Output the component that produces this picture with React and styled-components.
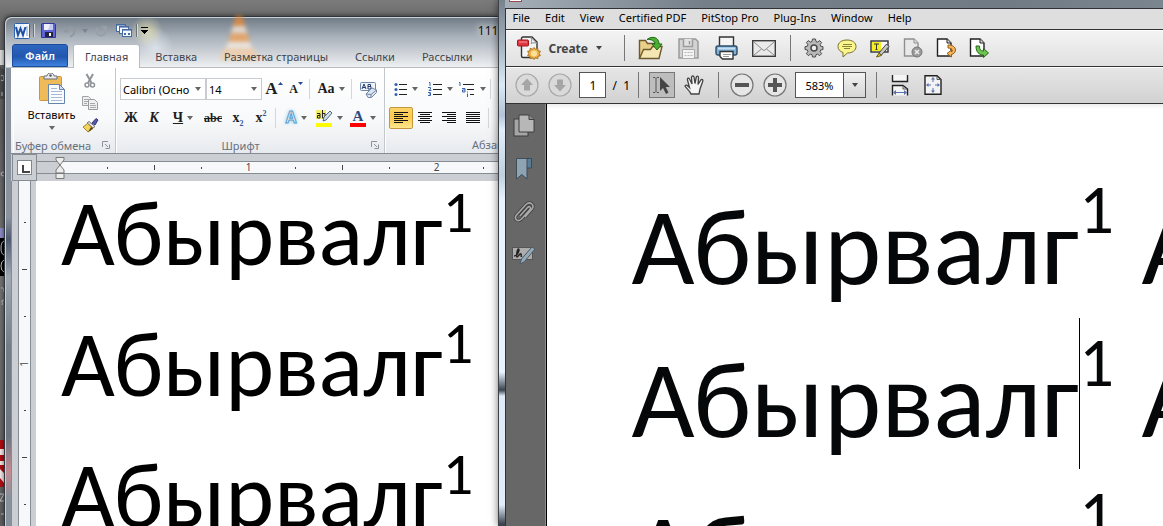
import React, { useState } from 'react';
import styled, { createGlobalStyle, css } from 'styled-components';

const GlobalStyle = createGlobalStyle`
  * {
    box-sizing: border-box;
  }

  body {
    margin: 0;
    overflow: hidden;
    font-family: 'Noto Sans', 'Open Sans', sans-serif;
    font-size: 11px;
  }

  button, input, select {
    font: inherit;
    color: inherit;
    margin: 0;
    padding: 0;
    border: 0;
    background: none;
  }
`;

const Arrow = ({ size = 5, color = '#666' }) => (
  <svg width={size + 1} height="4" viewBox="0 0 6 4" aria-hidden="true">
    <path d="M0 0h6L3 4z" fill={color} />
  </svg>
);

/* ---------- word icons ---------- */

const WordLogo = () => (
  <svg width="16" height="16" viewBox="0 0 16 16">
    <rect x="0.5" y="0.5" width="15" height="15" rx="1" fill="#e9f1fb" stroke="#2d62ae" />
    <rect x="10" y="1" width="5" height="14" fill="#fff" />
    <path d="M12 4h2M12 6h2M12 8h2M12 10h2M12 12h2" stroke="#6f9bd4" />
    <path d="M2 4l2 8 2.500-6.500L9 12l2.500-8" fill="none" stroke="#1f4fa0" strokeWidth="2" />
  </svg>
);

const SaveIcon = () => (
  <svg width="15" height="15" viewBox="0 0 15 15">
    <path d="M1 .5h12.500l1 1v13H.5V1z" fill="#5f62d4" stroke="#34369b" />
    <rect x="3" y="1" width="9" height="6" fill="#eef0fb" />
    <path d="M9 1h3v6H7z" fill="#c5cbee" />
    <rect x="4" y="9" width="8" height="5" fill="#22233f" />
    <rect x="8" y="10" width="2" height="3" fill="#fff" />
  </svg>
);

const UndoIcon = () => (
  <svg width="14" height="14" viewBox="0 0 14 14">
    <path d="M3 6c3-4 9-3 8.500 1.500C11.200 10 9 12 7 12.500" fill="none" stroke="#9299a1" strokeWidth="2.200" />
    <path d="M.5 2v6.500H7z" fill="#9299a1" />
  </svg>
);

const RedoIcon = () => (
  <svg width="14" height="14" viewBox="0 0 14 14">
    <path d="M3.500 4c-2.500 4 0 7.500 3.500 7.500s6-3.500 4-7" fill="none" stroke="#9aa0a8" strokeWidth="2.200" />
    <path d="M7 2h6v5.500z" fill="#9aa0a8" />
  </svg>
);

const WindowsIcon = () => (
  <svg width="17" height="14" viewBox="0 0 17 14">
    {[[0, 0], [3, 2], [6, 5]].map(([x, y]) => (
      <g key={x}>
        <rect x={x + 0.5} y={y + 0.5} width="9" height="7" fill="#f5f9ff" stroke="#48699c" />
        <path d={`M${x + 1} ${y + 1.5}h8`} stroke="#86a5d2" />
      </g>
    ))}
    <path d="M8 10h2M12 10h2" stroke="#3c6db5" strokeWidth="2" />
  </svg>
);

const QuickMore = () => (
  <svg width="8" height="8" viewBox="0 0 8 8" shapeRendering="crispEdges">
    <rect width="7" height="1" fill="#000" />
    <path d="M0 3h7L3.500 7z" fill="#000" />
  </svg>
);

const PasteIcon = () => (
  <svg width="26" height="31" viewBox="0 0 26 31">
    <rect x="0.5" y="3.5" width="22" height="24" rx="1" fill="#efbb59" stroke="#cf9440" />
    <path d="M5 6V3h3c0-4 7-4 7 0h3v3z" fill="#e8ebee" stroke="#6a6f76" />
    <circle cx="11.5" cy="2.500" r="1.200" fill="#555" />
    <path d="M9.500 11.500h11l5 5v14h-16z" fill="#fafcff" stroke="#6584ab" />
    <path d="M20.500 11.500v5h5z" fill="#d3e0f0" stroke="#6584ab" />
    <path d="M12 15.500h6M12 18.500h11M12 21.500h11M12 24.500h11M12 27.500h11" stroke="#a6b9d1" />
  </svg>
);

const CutIcon = () => (
  <svg width="12" height="16" viewBox="0 0 12 16">
    <path d="M2.500 1l5 9M9 1l-5 9" stroke="#8f9499" strokeWidth="2" />
    <circle cx="3" cy="12" r="2" fill="none" stroke="#8f9499" strokeWidth="1.500" />
    <circle cx="8.500" cy="12" r="2" fill="none" stroke="#8f9499" strokeWidth="1.500" />
  </svg>
);

const CopyIcon = () => (
  <svg width="16" height="14" viewBox="0 0 16 14">
    <path d="M.5.5h6l2 2v7h-8z" fill="#eee" stroke="#a1a4a7" />
    <path d="M2 3.500h4M2 5.500h4M2 7.500h3" stroke="#aaa" />
    <path d="M6.500 3.500h6l3 3v7h-9z" fill="#f0f0f0" stroke="#999c9f" />
    <path d="M8 7.500h5M8 9.500h6M8 11.500h6" stroke="#aaa" />
  </svg>
);

const BrushIcon = () => (
  <svg width="17" height="15" viewBox="0 0 17 15">
    <path d="M10 5l4-4.500L16 2l-3 5z" fill="#5656ad" stroke="#35357a" />
    <path d="M7 3.500l6 5-2 1.500-6-5z" fill="#dfe2e7" stroke="#6d6f74" />
    <path d="M5.500 5.500L1 9l5 5 5-3.500z" fill="#f2d45d" stroke="#a5862f" />
    <path d="M6 14l5-3.500-2-1.500z" fill="#4d4220" />
  </svg>
);

const GrowIcon = ({ down }) => (
  <GrowSvg width="5" height="3" viewBox="0 0 5 3">
    <path d={down ? 'M0 0h5L2.500 3z' : 'M0 3h5L2.500 0z'} fill="#2a4a94" />
  </GrowSvg>
);

const ClearIcon = () => (
  <svg width="17" height="17" viewBox="0 0 17 17">
    <rect x="0.500" y="1.500" width="15" height="8" rx="1" fill="#eff4fb" stroke="#6d86ad" />
    <path d="M2 8l2-5 2 5M3 6.500h2M8 3.500h2.500v2H8zM8 5.500h3V8H8z" fill="none" stroke="#263d6b" />
    <path d="M6 13l6-6 4.500 2v2.500l-5 5H8z" fill="#dde5f0" stroke="#7187a8" />
    <path d="M6 13l5 .5 5.500-4.500M11 13.500v3" fill="none" stroke="#7187a8" />
  </svg>
);

const HighlightIcon = () => (
  <svg width="17" height="17" viewBox="0 0 17 17">
    <rect x="0" y="0" width="10" height="9" fill="#f2ee63" />
    <path d="M1 3.500h3V8H1.500V5.500H4M6.500 0v8H9V3.500H6.500" fill="none" stroke="#222" />
    <path d="M7 11l1-4 6-6 2 2-6 7z" fill="#cfdded" stroke="#55697f" />
    <rect x="0" y="13" width="16" height="4" fill="#fdfb00" />
  </svg>
);

const BulletsIcon = () => (
  <svg width="14" height="14" viewBox="0 0 14 14">
    <g fill="#3a62ad">
      <circle cx="2" cy="2.500" r="1.600" />
      <circle cx="2" cy="7.500" r="1.600" />
      <circle cx="2" cy="12.500" r="1.500" />
    </g>
    <path d="M5 2.500h8M5 7.500h8M5 12.500h8" stroke="#222" />
  </svg>
);

const NumbersIcon = () => (
  <svg width="15" height="14" viewBox="0 0 15 14">
    <path d="M1 .5h1v3.500M0 5.500h2.500v1.500L1 8.500h2.500M0 10.500h2.500v3H0M1 12h2" fill="none" stroke="#3a62ad" />
    <path d="M5 2.500h9M5 7.500h9M5 12.500h9" stroke="#222" />
  </svg>
);

const LevelsIcon = () => (
  <svg width="18" height="15" viewBox="0 0 18 15">
    <path d="M1 .5h1V4M4 6.500h3V10H4.500V8H7M9.500 9.500v1M9.500 11.500V15" fill="none" stroke="#3a62ad" />
    <path d="M5 2.500h11M9 7.500h7M12 12.500h4" stroke="#222" />
  </svg>
);

const alignRows = {
  left: [[0, 14], [0, 9], [0, 14], [0, 9], [0, 14], [0, 9]],
  center: [[0, 14], [2, 10], [0, 14], [2, 10], [0, 14], [2, 10]],
  right: [[0, 14], [5, 9], [0, 14], [5, 9], [0, 14], [5, 9]],
  justify: [[0, 14], [0, 14], [0, 14], [0, 14], [0, 14], [0, 14]],
};

const AlignIcon = ({ kind }) => (
  <svg width="14" height="12" viewBox="0 0 14 12" shapeRendering="crispEdges">
    {alignRows[kind].map(([x, w], i) => (
      <rect key={i} x={x} y={i * 2} width={w} height="1" fill="#111" />
    ))}
  </svg>
);

const Launcher = () => (
  <svg width="8" height="8" viewBox="0 0 8 8">
    <path d="M.5 6V.5H6M3 3l3 3M7.500 3.500v4h-4" fill="none" stroke="#8c939c" />
  </svg>
);

const Cone = () => (
  <ConeSvg width="44" height="48" viewBox="0 0 44 48" aria-hidden="true">
    <path d="M19 2h6l4 12H15z" fill="#e78a35" />
    <path d="M16 12h12l2 7H14z" fill="#f0e6db" />
    <path d="M14 19h16l3 9H11z" fill="#eea25a" />
    <path d="M11 28h22l2 8H9z" fill="#f3efea" />
    <path d="M7 34h30l5 12H2z" fill="#f4cda8" />
  </ConeSvg>
);

/* ---------- word ---------- */

const tabs = ['Главная', 'Вставка', 'Разметка страницы', 'Ссылки', 'Рассылки'];
const rulerMarks = ['dot', 'tick', 'dot', '1', 'dot', 'tick', 'dot', '2', 'dot'];

const WordApp = () => {
  const [tab, setTab] = useState(tabs[0]);
  const [align, setAlign] = useState('left');

  return (
    <WordWindow>
      <Cone />
      <WordTitle>
        <QuickButton aria-label="Word" $w={22}><WordLogo /></QuickButton>
        <QuickSep />
        <QuickButton aria-label="Сохранить" $w={24}><SaveIcon /></QuickButton>
        <QuickButton aria-label="Отменить" $w={30}><UndoIcon /><Arrow color="#7d848c" /></QuickButton>
        <QuickButton aria-label="Повторить" $w={22}><RedoIcon /></QuickButton>
        <QuickButton aria-label="Окна" $w={24}><WindowsIcon /></QuickButton>
        <QuickSep />
        <QuickButton aria-label="Настройка панели" $w={12}><QuickMore /></QuickButton>
        <DocName>111</DocName>
      </WordTitle>
      <Tabs>
        <FileTab>Файл</FileTab>
        {tabs.map(name => (
          <Tab key={name} $active={name === tab} onClick={() => setTab(name)}>{name}</Tab>
        ))}
      </Tabs>
      <Ribbon>
        <Group>
          <GroupBody>
            <PasteButton>
              <PasteIcon />
              <span>Вставить</span>
              <Arrow />
            </PasteButton>
            <SmallColumn>
              <Tool aria-label="Вырезать" $w={24}><CutIcon /></Tool>
              <Tool aria-label="Копировать" $w={24}><CopyIcon /></Tool>
              <Tool aria-label="Формат по образцу" $w={24}><BrushIcon /></Tool>
            </SmallColumn>
          </GroupBody>
          <GroupLabel><span>Буфер обмена</span><Launcher /></GroupLabel>
        </Group>
        <Group>
          <GroupRows>
            <ToolRow>
              <Combo $w={86}>
                <select aria-label="Шрифт"><option>Calibri (Осно</option></select>
                <Arrow />
              </Combo>
              <Combo $w={56}>
                <select aria-label="Размер"><option>14</option></select>
                <Arrow />
              </Combo>
              <Tool aria-label="Увеличить" $w={24} $tight><Serif $size={17}>A</Serif><GrowIcon /></Tool>
              <Tool aria-label="Уменьшить" $w={20} $tight><Serif $size={12}>A</Serif><GrowIcon down /></Tool>
              <ToolSep />
              <Tool aria-label="Регистр" $w={34}><Serif $size={14}>Aa</Serif><Arrow /></Tool>
              <ToolSep />
              <Tool aria-label="Очистить формат" $w={24}><ClearIcon /></Tool>
            </ToolRow>
            <ToolRow>
              <Tool $w={22}><Serif $size={14}>Ж</Serif></Tool>
              <Tool $w={24}><Serif $size={14} $italic>К</Serif></Tool>
              <Tool $w={34}><Serif $size={14} $line="underline">Ч</Serif><Arrow /></Tool>
              <Tool $w={26}><Serif $size={12} $line="line-through">abc</Serif></Tool>
              <Tool $w={24}><Serif $size={14}>x<sub>2</sub></Serif></Tool>
              <Tool $w={22}><Serif $size={14}>x<sup>2</sup></Serif></Tool>
              <ToolSep />
              <Tool $w={32}><Glow>A</Glow><Arrow /></Tool>
              <Tool aria-label="Выделение" $w={34}><HighlightIcon /><Arrow /></Tool>
              <Tool $w={34}><RedBar>A</RedBar><Arrow /></Tool>
            </ToolRow>
          </GroupRows>
          <GroupLabel $center><span>Шрифт</span><Launcher /></GroupLabel>
        </Group>
        <Group $last>
          <GroupRows>
            <ToolRow>
              <Tool aria-label="Маркеры" $w={34}><BulletsIcon /><Arrow /></Tool>
              <Tool aria-label="Нумерация" $w={34}><NumbersIcon /><Arrow /></Tool>
              <Tool aria-label="Многоуровневый список" $w={30}><LevelsIcon /><Arrow /></Tool>
              <ToolSep />
            </ToolRow>
            <ToolRow>
              {Object.keys(alignRows).map(kind => (
                <Tool
                  key={kind}
                  aria-label={kind}
                  $w={24}
                  $on={kind === align}
                  onClick={() => setAlign(kind)}
                >
                  <AlignIcon kind={kind} />
                </Tool>
              ))}
              <ToolSep />
            </ToolRow>
          </GroupRows>
          <ParagraphLabel>Абзац</ParagraphLabel>
        </Group>
      </Ribbon>
      <RulerBar>
        <Corner><CornerBox /></Corner>
        <RulerMargin />
        <Ruler>
          <Indent width="10" height="22" viewBox="0 0 10 22" aria-hidden="true">
            <path d="M1 .5h8V3L5 8 1 3zM5 8l4 5v3H1v-3zM1 16.500h8v5H1z" fill="#ececec" stroke="#777" />
          </Indent>
          {rulerMarks.map((mark, i) => <Mark key={i} kind={mark} />)}
        </Ruler>
      </RulerBar>
      <WordBody>
        <SideRuler>
          <SideStrip>
            {rulerMarks.slice(0, 7).map((mark, i) => <Mark key={i} kind={mark} side />)}
          </SideStrip>
        </SideRuler>
        <WordPage>
          {[0, 1, 2].map(n => (
            <WordLine key={n}>Абырвалг<sup>1</sup></WordLine>
          ))}
        </WordPage>
      </WordBody>
    </WordWindow>
  );
};

const Mark = ({ kind, side }) => (
  <MarkCell $side={side}>
    {kind === 'dot' || kind === 'tick'
      ? <MarkLine $long={kind === 'tick'} $side={side} />
      : <MarkNumber $side={side}>{kind}</MarkNumber>}
  </MarkCell>
);

/* ---------- acrobat icons ---------- */

const PageShape = ({ stroke = '#333', fill = '#fff' }) => (
  <>
    <path d="M.5 1h9.500l4 4v13H.5z" fill={fill} stroke={stroke} strokeWidth="1.400" />
    <path d="M10 1v4h4" fill="#ddd" stroke={stroke} />
  </>
);

const CreateIcon = () => (
  <svg width="24" height="24" viewBox="0 0 24 24">
    <path d="M4.500 2.500Q4.500 1 6 1h9l5 5v14q0 1.500-1.500 1.500H6q-1.500 0-1.500-1.500z" fill="#f4f4f4" stroke="#333" strokeWidth="1.400" />
    <path d="M14 1.500c1 3 1 5 0 6 2-1 4-1 6 0z" fill="#fff" stroke="#888" />
    <rect x="0.500" y="4" width="11" height="6" rx="1" fill="#e2363f" stroke="#a5141d" />
    <path d="M2 6h8" stroke="#f39a9d" />
    <path d="M17 11.500l1.500 1.800 2.300-1 .2 2.500 2.400.5-1.200 2.200 1.200 2.200-2.400.5-.2 2.500-2.300-1L17 23.500l-1.500-1.800-2.300 1-.2-2.500-2.400-.5 1.200-2.200-1.200-2.200 2.400-.5.2-2.500 2.300 1z" fill="#f0b54a" stroke="#a9711c" />
    <circle cx="17" cy="17.500" r="3" fill="#fbe09a" />
  </svg>
);

const FolderIcon = () => (
  <svg width="25" height="24" viewBox="0 0 25 24">
    <path d="M1.500 22.500v-18h6l2 3h11v5" fill="#e8cf8a" stroke="#6e592d" strokeWidth="1.400" />
    <path d="M1.500 22.500l4-9h7l2-3h9.500l-3 12z" fill="#f6e6b4" stroke="#6e592d" strokeWidth="1.400" />
    <path d="M9 3.500C14-.5 21 1 21 8h3l-5 6-5-6h3c0-3-4-5-8-4.500z" fill="#4cae32" stroke="#226c16" />
  </svg>
);

const DiskIcon = () => (
  <svg width="21" height="21" viewBox="0 0 21 21">
    <path d="M1 1h16.500L20 3.500V20H1z" fill="#d3d3d3" stroke="#9b9b9b" strokeWidth="1.500" />
    <path d="M5.500 1v7.500h9V1M11.500 3v3.500" fill="#e2e2e2" stroke="#9b9b9b" strokeWidth="1.500" />
    <path d="M4.500 20v-8.500h12V20" fill="#f3f3f3" stroke="#aaa" />
    <path d="M6.500 14.500h8M6.500 17.500h8" stroke="#b9b9b9" strokeDasharray="2 1" />
  </svg>
);

const PrintIcon = () => (
  <svg width="23" height="24" viewBox="0 0 23 24">
    <path d="M4.500 10V1h14v9" fill="#f5f5f5" stroke="#333" strokeWidth="1.400" />
    <rect x="1" y="10" width="21" height="9" rx="2" fill="#7fb0d8" stroke="#2e4c68" strokeWidth="1.400" />
    <path d="M3 12.500h17" stroke="#c6e0f3" strokeWidth="2" />
    <path d="M5 15.500h13v7.500H7.500L5 20.500z" fill="#fff" stroke="#333" strokeWidth="1.400" />
    <path d="M8 18.500h8M8 20.500h6" stroke="#999" />
  </svg>
);

const MailIcon = () => (
  <svg width="24" height="17" viewBox="0 0 24 17">
    <rect x="0.700" y="0.700" width="22.600" height="15.600" fill="#e9e9e9" stroke="#3b3b3b" strokeWidth="1.400" />
    <path d="M2 2l9 8q1 .8 2 0l9-8M2 15l7.500-6M22 15l-7.500-6" fill="none" stroke="#8b8b8b" />
  </svg>
);

const GearIcon = () => (
  <svg width="20" height="20" viewBox="0 0 20 20">
    <path d="M8.500 1h3l.5 2.500 1.500.6 2.200-1.500 1.900 1.900-1.500 2.200.6 1.500 2.300.5v2.800l-2.300.5-.6 1.500 1.500 2.200-1.900 1.900-2.200-1.500-1.500.6-.5 2.300h-3L8 16.700l-1.500-.6-2.200 1.500-1.900-1.900 1.500-2.200-.6-1.500L1 11.500V8.700l2.300-.5.6-1.500-1.500-2.200 1.900-1.900 2.200 1.500L8 3.500z" fill="#b9b9b9" stroke="#4a4a4a" />
    <circle cx="10" cy="10" r="3" fill="#eee" stroke="#4a4a4a" strokeWidth="1.500" />
  </svg>
);

const BubbleIcon = () => (
  <svg width="20" height="19" viewBox="0 0 20 19">
    <path d="M10 1c5.500 0 9 2.700 9 6.500S15.500 14 10.500 14L6 18v-4.500C3 12.500 1 10.500 1 7.500 1 3.700 4.500 1 10 1z" fill="#fbf58d" stroke="#77712e" />
    <path d="M6 5.500h9M5 7.500h10M7 9.500h6" stroke="#8a8436" />
  </svg>
);

const TextMarkIcon = () => (
  <svg width="20" height="19" viewBox="0 0 20 19">
    <rect x="1" y="2" width="17" height="11" fill="#f7f7f7" stroke="#333" strokeWidth="1.400" />
    <rect x="2" y="3" width="9" height="9" fill="#f5ee22" />
    <path d="M4 5h5M6.500 5v5.500M5.500 10.500h2" stroke="#333" strokeWidth="1" fill="none" />
    <path d="M9 14l7.500-9L19 7.500 11.500 16z" fill="#c6c6c6" stroke="#444" />
    <path d="M9 14l2.500 2.500-5 1.500z" fill="#d8c22a" stroke="#6b5f12" />
  </svg>
);

const PageActionIcon = ({ kind }) => (
  <svg width="20" height="20" viewBox="-1 0 20 20">
    <PageShape stroke={kind === 'stop' ? '#8f8f8f' : '#222'} fill={kind === 'stop' ? '#e9e9e9' : '#fff'} />
    {kind === 'stop' && (
      <>
        <circle cx="13" cy="14" r="5" fill="#9b9b9b" stroke="#777" />
        <path d="M11 12l4 4M15 12l-4 4" stroke="#eee" strokeWidth="1.400" />
      </>
    )}
    {kind === 'turn' && (
      <path d="M11 7c4-.5 7.500 2 7.500 5 0 2.500-2 4-4 4.500V19L10 15.500l4.500-3.500v2c2-1.500.5-4-3.500-4z" fill="#f5b45b" stroke="#9a5c12" />
    )}
    {kind === 'export' && (
      <path d="M6 8h3.500c0 3.500 1 5 4 5v-2.500l5 4.500-5 4.500V17C9 17 6 14 6 8z" fill="#6cc44d" stroke="#22661a" />
    )}
  </svg>
);

const RoundIcon = ({ kind, muted }) => (
  <svg width="24" height="24" viewBox="0 0 24 24">
    <circle cx="12" cy="12" r="11" fill={muted ? '#dadada' : '#e6e6e6'} stroke={muted ? '#a9a9a9' : '#757575'} strokeWidth="1.200" />
    {kind === 'up' && <path d="M12 5.500l6 6.500h-3v5.500H9V12H6z" fill="#a6a6a6" />}
    {kind === 'down' && <path d="M12 18.500L6 12h3V6.500h6V12h3z" fill="#a6a6a6" />}
    {kind === 'minus' && <path d="M5 10h14v4H5z" fill="#555" />}
    {kind === 'plus' && <path d="M5 10h5V5h4v5h5v4h-5v5h-4v-5H5z" fill="#555" />}
  </svg>
);

const SelectIcon = () => (
  <svg width="20" height="20" viewBox="0 0 20 20">
    <path d="M1 2.500h2L4 3.500l1-1h2M4 3.500v13M1 17.500h2l1-1 1 1h2" fill="none" stroke="#555" />
    <path d="M8 2v14l3-3 3 6 2.500-1.500-2.800-5.500H18z" fill="#444" />
  </svg>
);

const HandIcon = () => (
  <svg width="21" height="20" viewBox="0 0 21 20">
    <path d="M7 19c-1-3-5-6-6-8 1-2 3 0 4.500 1.500L3.500 5C3 3 5 2.500 5.800 4.500L8 9 7.500 2.500c0-2 2.300-2 2.600 0L11 8.500l1.200-6c.4-2 2.500-1.500 2.300.4L14 9.500l2.700-4.300c1-1.500 2.800-.5 2 1.300L16 14l-1 5z" fill="#f5f5f5" stroke="#444" strokeWidth="1.300" />
  </svg>
);

const FitWidthIcon = () => (
  <svg width="18" height="21" viewBox="0 0 18 21">
    <path d="M1.500 0v6.500h15V0" fill="#f5f5f5" stroke="#222" strokeWidth="1.400" />
    <path d="M1.500 20.500v-10h10.500l4.500 3.500v6.500" fill="#f5f5f5" stroke="#222" strokeWidth="1.400" />
    <path d="M12 10.500V14h4" fill="none" stroke="#555" />
    <path d="M3 17.500h12" stroke="#5b72ae" />
    <path d="M2 17.500l3-2.500v5zM16 17.500L13 15v5z" fill="#5b72ae" />
  </svg>
);

const FitPageIcon = () => (
  <svg width="18" height="20" viewBox="0 0 18 20">
    <path d="M1 .700h12L17 4.500v14.800H1z" fill="#f3f3f3" stroke="#222" strokeWidth="1.400" />
    <path d="M13 1v3.500h4" fill="none" stroke="#555" />
    <path d="M9 4v3M9 13v3M4 10h3M11 10h3" stroke="#5b72ae" />
    <path d="M9 2l2 2.500H7zM9 18l2-2.500H7zM2 10l2.500-2v4zM16 10l-2.500-2v4z" fill="#5b72ae" />
  </svg>
);

const PagesIcon = () => (
  <svg width="22" height="24" viewBox="0 0 22 24">
    <rect x="1" y="5" width="14" height="17" fill="#a5a5a5" stroke="#3f3f3f" />
    <path d="M6 1h10l5 4.500V18H6z" fill="#b7b7b7" stroke="#3f3f3f" />
    <path d="M16 1v4.500h5" fill="#8b8b8b" stroke="#3f3f3f" />
  </svg>
);

const BookmarkIcon = () => (
  <svg width="18" height="24" viewBox="0 0 18 24">
    <path d="M10 1.500h6.500V11H10z" fill="#597c97" stroke="#3a4b58" />
    <path d="M1.500 1.500H12V22l-5.200-4.500L1.500 22z" fill="#8ea4b3" stroke="#3f4d57" />
  </svg>
);

const ClipIcon = () => (
  <svg width="24" height="24" viewBox="0 0 24 24">
    <path d="M8 16l7.500-8.500c2-2 4 0 2.500 2L9.500 19c-3.500 3.500-8 0-5-4L14 4.500c4-4 9 .5 6 4.500L13 17" fill="none" stroke="#404040" strokeWidth="3.200" />
    <path d="M8 16l7.500-8.500c2-2 4 0 2.500 2L9.500 19c-3.500 3.500-8 0-5-4L14 4.500c4-4 9 .5 6 4.500L13 17" fill="none" stroke="#a9a9a9" strokeWidth="1.600" />
  </svg>
);

const SignIcon = () => (
  <svg width="24" height="20" viewBox="0 0 24 20">
    <rect x="0.500" y="2.500" width="20" height="12" fill="#adadad" stroke="#555" />
    <path d="M2 11c4 0 6-7 4.500-7S4 12 5 12s3-4 4-3-1 3 1 2" fill="none" stroke="#222" strokeWidth="1.400" />
    <path d="M8 19l1.500-5L20 2l3 2-10.500 12.500z" fill="#93aabb" stroke="#4d5a64" />
  </svg>
);

/* ---------- acrobat ---------- */

const menus = ['File', 'Edit', 'View', 'Certified PDF', 'PitStop Pro', 'Plug-Ins', 'Window', 'Help'];

const AcrobatApp = () => {
  const [page, setPage] = useState('1');

  return (
    <AcrobatWindow>
      <AcrobatTitle><TitleIcon /></AcrobatTitle>
      <AcrobatInner>
        <MenuBar>
          {menus.map(name => <MenuItem key={name}>{name}</MenuItem>)}
        </MenuBar>
        <Toolbar>
          <CreateButton><CreateIcon /><span>Create</span><Arrow size={7} color="#444" /></CreateButton>
          <BarSep />
          <BarButton aria-label="Open" $wide><FolderIcon /></BarButton>
          <BarButton aria-label="Save" $wide><DiskIcon /></BarButton>
          <BarButton aria-label="Print" $wide><PrintIcon /></BarButton>
          <BarButton aria-label="Email" $wide><MailIcon /></BarButton>
          <BarSep />
          <BarButton aria-label="Settings"><GearIcon /></BarButton>
          <BarButton aria-label="Comment"><BubbleIcon /></BarButton>
          <BarButton aria-label="Highlight text"><TextMarkIcon /></BarButton>
          <BarButton aria-label="Remove"><PageActionIcon kind="stop" /></BarButton>
          <BarButton aria-label="Rotate"><PageActionIcon kind="turn" /></BarButton>
          <BarButton aria-label="Export"><PageActionIcon kind="export" /></BarButton>
        </Toolbar>
        <Toolbar $second>
          <BarButton aria-label="Previous page"><RoundIcon kind="up" muted /></BarButton>
          <BarButton aria-label="Next page"><RoundIcon kind="down" muted /></BarButton>
          <PageInput aria-label="Page" value={page} onChange={e => setPage(e.target.value)} />
          <PageTotal>/&nbsp; 1</PageTotal>
          <BarSep />
          <BarButton aria-label="Select"><Pressed><SelectIcon /></Pressed></BarButton>
          <BarButton aria-label="Hand"><HandIcon /></BarButton>
          <BarSep />
          <BarButton aria-label="Zoom out"><RoundIcon kind="minus" /></BarButton>
          <BarButton aria-label="Zoom in"><RoundIcon kind="plus" /></BarButton>
          <ZoomBox>
            <select aria-label="Zoom"><option>583%</option></select>
            <ZoomArrow><Arrow size={7} color="#444" /></ZoomArrow>
          </ZoomBox>
          <BarSep $wide />
          <BarButton aria-label="Fit width"><FitWidthIcon /></BarButton>
          <BarButton aria-label="Fit page"><FitPageIcon /></BarButton>
        </Toolbar>
        <AcrobatBody>
          <NavPane>
            <NavButton aria-label="Pages"><PagesIcon /></NavButton>
            <NavButton aria-label="Bookmarks"><BookmarkIcon /></NavButton>
            <NavButton aria-label="Attachments"><ClipIcon /></NavButton>
            <NavButton aria-label="Signatures"><SignIcon /></NavButton>
          </NavPane>
          <PdfPage>
            {[0, 1, 2].map(n => (
              <PdfLine key={n}>
                <PdfWord>Абырвалг{n === 1 && <Caret />}<sup>1</sup></PdfWord>
                <PdfWord>Абырвалг<sup>1</sup></PdfWord>
              </PdfLine>
            ))}
          </PdfPage>
        </AcrobatBody>
      </AcrobatInner>
    </AcrobatWindow>
  );
};

const App = () => (
  <Desktop>
    <GlobalStyle />
    <Backdrop width="16" height="526" viewBox="0 0 16 526" aria-hidden="true">
      <path d="M0 50h5v15H0z" fill="#ddd" />
      <path d="M0 66q3 5 5 3v30H0z" fill="#4b4b4b" />
      <path d="M0 228h5v10H0z" fill="#8d8cc8" />
      <path d="M0 238h5v38H0z" fill="#000" />
      <path d="M4 241q-3 1-3 7t3 7M4 260q-3 1-3 6t3 6" fill="none" stroke="#c8c8d8" />
      <path d="M0 440h5v47H0z" fill="#b40d12" />
      <path d="M0 449h4v6H0zM0 461h5v4H0zM0 469l5 5v10l-5-6z" fill="#f6e9e9" />
      <path d="M1 76q3-2 3 2t-3 2M2 92v4M4 172q-3 0-3 2t3 2M1 288q3-1 3 4M4 300q-3 0-2 2t0 3M0 494h4l-4 7h4M1 514h3" fill="none" stroke="#c5c5c5" />
    </Backdrop>
    <WordApp />
    <AcrobatApp />
  </Desktop>
);

/* ---------- desktop ---------- */

const Desktop = styled.main`
  position: relative;
  display: grid;
  grid-template-columns: minmax(0, 3fr) minmax(0, 4fr);
  height: 100vh;
  overflow: hidden;
  background: linear-gradient(#7b7b7b, #6c6c6c 16px, #5f5f5f 120px, #757575 50%, #606060);
`;

const Backdrop = styled.svg`
  position: absolute;
  left: 0;
  top: 0;
`;

/* ---------- word styles ---------- */

const WordWindow = styled.section`
  position: relative;
  display: flex;
  flex-direction: column;
  min-height: 0;
  margin: 16px 0 0 4px;
  padding-left: 6px;
  border: 1px solid #30353b;
  border-width: 1px 0 0 1px;
  border-radius: 7px 0 0 0;
  box-shadow: inset 1px 1px 0 #c9d0d8, 0 0 5px rgba(0, 0, 0, 0.6);
  background:
    radial-gradient(ellipse 16px 16px at 142px 14px, rgba(250, 244, 180, 0.6), transparent),
    radial-gradient(ellipse 18px 20px at 150px 30px, rgba(235, 240, 250, 0.6), transparent),
    linear-gradient(90deg, transparent 6px, #f4f6f8 6px) 0 51px no-repeat,
    linear-gradient(#6f7a85, #a9b1ba 20px, #eef0f2 50px, #8b949e 51px, #8a939e 200px, #4e5a70 222px, #9fa8b2 260px, #737d88 330px, #6d7680 420px, #c38d95 455px, #87919b 480px);
`;

const ConeSvg = styled.svg`
  position: absolute;
  left: 212px;
  top: -3px;
  filter: blur(2px);
  opacity: 0.8;
`;

const WordTitle = styled.header`
  position: relative;
  display: flex;
  align-items: center;
  height: 27px;
`;

const QuickButton = styled.button`
  display: flex;
  align-items: center;
  justify-content: center;
  gap: 5px;
  flex: none;
  width: ${props => props.$w}px;
  height: 22px;

  svg {
    flex: none;
  }
`;

const QuickSep = styled.span`
  width: 1px;
  height: 13px;
  margin-right: 2px;
  background: #6b7179;
  box-shadow: 1px 0 0 #d5d9dd;
`;

const DocName = styled.span`
  margin-left: auto;
  font-size: 12px;
  text-shadow: 0 0 6px #fff, 0 0 8px #fff;
  color: #111;
`;

const Tabs = styled.nav`
  position: relative;
  display: flex;
  height: 24px;
  padding-left: 1px;
  border-bottom: 1px solid #b7bcc3;
`;

const Tab = styled.button`
  height: 24px;
  padding: 0 13px 0 14px;
  white-space: nowrap;
  color: #3f444a;

  ${props => props.$active && css`
    margin: 0 1px 0 2px;
    padding: 0 11px;
    border: 1px solid #b7bcc3;
    border-bottom: 0;
    border-radius: 3px 3px 0 0;
    background: #fff;
  `}
`;

const FileTab = styled.button`
  width: 56px;
  height: 23px;
  margin-right: 3px;
  border: 1px solid #1c4a9c;
  border-radius: 3px 3px 0 0;
  color: #fff;
  font-weight: 600;
  background: linear-gradient(#2f66c0, #2257b0 55%, #3f82dd);
`;

const Ribbon = styled.div`
  display: flex;
  height: 86px;
  padding-left: 2px;
  overflow: hidden;
  border-bottom: 1px solid #868c94;
  background: linear-gradient(#fff, #f8f9fa 60%, #e7eaee);
`;

const Group = styled.section`
  display: flex;
  flex-direction: column;
  flex: none;
  border-right: ${props => (props.$last ? 0 : 1)}px solid #c2c7cd;
  box-shadow: inset 1px 0 0 #fff;
`;

const GroupBody = styled.div`
  display: flex;
  flex: 1;
  width: 102px;
`;

const GroupRows = styled.div`
  display: flex;
  flex-direction: column;
  flex: 1;
  gap: 5px;
  padding: 9px 4px 0;
`;

const GroupLabel = styled.div`
  display: flex;
  align-items: center;
  justify-content: space-between;
  height: 16px;
  padding: 0 5px 0 2px;
  color: #67707d;

  span {
    flex: ${props => (props.$center ? 1 : 'none')};
    padding-right: ${props => (props.$center ? 8 : 0)}px;
    text-align: center;
  }
`;

const ParagraphLabel = styled.div`
  height: 16px;
  padding-left: 87px;
  line-height: 16px;
  color: #67707d;
`;

const PasteButton = styled.button`
  display: flex;
  flex-direction: column;
  align-items: center;
  width: 65px;
  padding: 5px 0 0 12px;
  line-height: 22px;
`;

const SmallColumn = styled.div`
  display: flex;
  flex-direction: column;
  padding: 2px 0 0;
`;

const ToolRow = styled.div`
  display: flex;
  align-items: center;
  height: 24px;
`;

const Tool = styled.button`
  display: flex;
  align-items: center;
  justify-content: center;
  gap: ${props => (props.$tight ? 0 : 4)}px;
  flex: none;
  width: ${props => props.$w}px;
  height: 22px;
  color: #1d1d1d;

  svg {
    flex: none;
  }

  ${props => props.$on && css`
    border: 1px solid #c2973e;
    border-radius: 2px;
    background: linear-gradient(#fbd46a, #fcc94d 45%, #fee78c);
  `}
`;

const GrowSvg = styled.svg`
  align-self: flex-start;
  margin-top: 4px;
`;

const ToolSep = styled.span`
  flex: none;
  width: 1px;
  height: 20px;
  margin: 0 4px 0 3px;
  background: #d3d6da;
`;

const Combo = styled.label`
  display: flex;
  align-items: center;
  width: ${props => props.$w}px;
  height: 22px;
  padding: 0 4px 0 2px;
  border: 1px solid #c8ccd1;
  background: #fff;

  select {
    flex: 1;
    min-width: 0;
    appearance: none;
    outline: 0;
  }
`;

const Serif = styled.span`
  font-family: 'Liberation Serif', serif;
  font-size: ${props => props.$size}px;
  font-weight: 700;
  font-style: ${props => (props.$italic ? 'italic' : 'normal')};
  text-decoration: ${props => props.$line || 'none'};
  line-height: 20px;

  sub, sup {
    font-size: 8px;
    line-height: 0;
    color: #2f5aa8;
  }
`;

const Glow = styled.span`
  font-family: 'Liberation Sans', sans-serif;
  font-size: 16px;
  font-weight: 700;
  color: #eaf5fd;
  -webkit-text-stroke: 1px #5b9bc8;
  text-shadow: 0 0 4px #6bc1f2;
`;

const RedBar = styled.span`
  width: 16px;
  height: 17px;
  border-bottom: 4px solid #f00;
  font-family: 'Liberation Serif', serif;
  font-size: 15px;
  font-weight: 700;
  line-height: 13px;
  color: #2c4a80;
`;

const RulerBar = styled.div`
  display: flex;
  align-items: center;
  flex: none;
  height: 27px;
  padding-left: 1px;
  background: #cbcfd4;
`;

const Corner = styled.div`
  display: flex;
  align-items: center;
  justify-content: center;
  width: 25px;
  height: 27px;
  border: 1px solid #858c94;
`;

const CornerBox = styled.span`
  width: 15px;
  height: 15px;
  border: 1px solid #80868e;
  background: #fff;

  &::after {
    content: '';
    display: block;
    width: 6px;
    height: 6px;
    margin: 4px 0 0 4px;
    border: solid #444;
    border-width: 0 0 2px 2px;
  }
`;

const RulerMargin = styled.span`
  width: 23px;
  height: 13px;
  border: 1px solid #858c94;
  border-width: 1px 0;
`;

const Ruler = styled.div`
  position: relative;
  display: flex;
  flex: 1;
  min-width: 0;
  height: 13px;
  padding-left: 24px;
  border: 1px solid #858c94;
  border-width: 1px 0;
  background: #f7f8f9;
`;

const Indent = styled.svg`
  position: absolute;
  left: -5px;
  top: -5px;
`;

const MarkCell = styled.span`
  display: flex;
  flex: none;
  align-items: center;
  justify-content: center;
  width: ${props => (props.$side ? 'auto' : '47px')};
  height: ${props => (props.$side ? '47px' : 'auto')};
`;

const MarkLine = styled.span`
  width: ${props => (props.$side ? (props.$long ? 5 : 2) : 1)}px;
  height: ${props => (props.$side ? 1 : props.$long ? 5 : 2)}px;
  background: #444;
`;

const MarkNumber = styled.span`
  font-size: 10px;
  line-height: 11px;
  color: #444;
  writing-mode: ${props => (props.$side ? 'sideways-lr' : 'horizontal-tb')};
`;

const WordBody = styled.div`
  display: flex;
  flex: 1;
  min-height: 0;
`;

const SideRuler = styled.div`
  width: 25px;
  padding: 0 6px;
  background: #cbcfd4;
  border-left: 1px solid #858c94;
`;

const SideStrip = styled.div`
  display: flex;
  flex-direction: column;
  width: 13px;
  height: 100%;
  padding-top: 18px;
  border: 1px solid #858c94;
  border-width: 0 1px;
  background: #f7f8f9;
`;

const WordPage = styled.article`
  flex: 1;
  min-width: 0;
  padding-left: 25px;
  overflow: hidden;
  background: #fff;
`;

const WordLine = styled.p`
  margin: 0;
  height: 131px;
  line-height: 104px;
  white-space: nowrap;
  font-family: Calibri, Carlito, Lato, 'Open Sans', sans-serif;
  font-size: 93px;
  color: #000;

  sup {
    font-size: 60px;
    line-height: 0;
    vertical-align: 33px;
  }
`;

/* ---------- acrobat styles ---------- */

const AcrobatWindow = styled.section`
  position: relative;
  display: flex;
  flex-direction: column;
  min-width: 0;
  min-height: 0;
  padding-left: 6px;
  border-left: 1px solid #3d4249;
  box-shadow: 0 0 8px rgba(0, 0, 0, 0.55);
  background: linear-gradient(#77828d, #9eabb8 40px, #dce9f6 85px, #b4c3d8 115px, #e3effb 130px, #c1cfdf 175px, #e9f4ff 200px, #e9f4ff 372px, #3b434d 390px, #dfeaf6 396px, #e2edf8 505px, #3b434d 524px);
`;

const AcrobatTitle = styled.header`
  height: 8px;
  padding-left: 4px;
  background: linear-gradient(90deg, #a6afb8, #747f8a 200px, #707b86 500px, #7a858f);
`;

const TitleIcon = styled.span`
  display: block;
  width: 13px;
  height: 2px;
  border: 1px solid #9c4850;
  border-top: 0;
  background: #fff;
`;

const AcrobatInner = styled.div`
  display: flex;
  flex-direction: column;
  flex: 1;
  min-height: 0;
  border: 1px solid #2f3338;
  border-width: 1px 0 0 1px;
`;

const MenuBar = styled.nav`
  display: flex;
  gap: 15px;
  height: 20px;
  padding: 0 0 3px 6px;
  background: #dedede;
`;

const MenuItem = styled.button`
  white-space: nowrap;
  color: #000;
`;

const Toolbar = styled.div`
  display: flex;
  align-items: center;
  height: 37px;
  padding-left: ${props => (props.$second ? 4 : 0)}px;
  border-top: 1px solid #333;
  box-shadow: inset 0 1px 0 #fff;
  background: ${props => (props.$second ? 'linear-gradient(#e6e6e6, #d2d2d2)' : 'linear-gradient(#f4f4f4, #e0e0e0)')};
`;

const CreateButton = styled.button`
  display: flex;
  align-items: center;
  gap: 7px;
  width: 111px;
  padding-left: 11px;
  font-size: 12px;
  font-weight: 700;
  color: #444;
`;

const BarButton = styled.button`
  display: flex;
  align-items: center;
  justify-content: center;
  flex: none;
  width: ${props => (props.$wide ? 38 : 33)}px;
  height: 32px;
`;

const BarSep = styled.span`
  flex: none;
  width: 1px;
  height: 26px;
  margin: 0 6px 0 ${props => (props.$wide ? 10 : 7)}px;
  background: #777;
`;

const Pressed = styled.span`
  display: flex;
  align-items: center;
  justify-content: center;
  width: 26px;
  height: 26px;
  border: 1px solid #777;
  background: #bdbdbd;
`;

const PageInput = styled.input`
  && {
    width: 27px;
    height: 26px;
    margin-left: 3px;
    border: 1px solid #555;
    background: #fff;
    text-align: center;
    font-size: 12px;
  }
`;

const PageTotal = styled.span`
  width: 25px;
  padding-left: 6px;
  font-size: 12px;
  white-space: nowrap;
`;

const ZoomBox = styled.label`
  display: flex;
  width: 71px;
  height: 26px;
  margin-left: 4px;
  border: 1px solid #555;
  background: #fff;

  select {
    flex: 1;
    min-width: 0;
    padding-left: 9px;
    appearance: none;
  }
`;

const ZoomArrow = styled.span`
  display: flex;
  align-items: center;
  justify-content: center;
  width: 22px;
  border-left: 1px solid #555;
  background: linear-gradient(#f2f2f2, #d5d5d5);
`;

const AcrobatBody = styled.div`
  display: flex;
  flex: 1;
  min-height: 0;
  border-top: 1px solid #333;
`;

const NavPane = styled.aside`
  display: flex;
  flex-direction: column;
  flex: none;
  width: 41px;
  border-right: 1px solid #000;
  box-shadow: inset -1px 0 0 #8d8d8d;
  background: #676767;
`;

const NavButton = styled.button`
  display: flex;
  align-items: center;
  justify-content: center;
  width: 36px;
  height: 43px;
`;

const PdfPage = styled.article`
  flex: 1;
  min-width: 0;
  padding: 66px 0 0 84px;
  overflow: hidden;
  background: linear-gradient(#ededed, #fff 5px);
`;

const PdfLine = styled.p`
  display: flex;
  margin: 0;
  height: 153px;
  line-height: 153px;
`;

const PdfWord = styled.span`
  position: relative;
  flex: none;
  width: 510px;
  white-space: nowrap;
  font-family: Calibri, Carlito, Lato, 'Open Sans', sans-serif;
  font-size: 109px;
  color: #060708;

  sup {
    font-size: 69px;
    line-height: 0;
    vertical-align: 51px;
  }
`;

const Caret = styled.i`
  position: absolute;
  top: -5px;
  width: 1px;
  height: 151px;
  background: #000;
`;

export default App;
